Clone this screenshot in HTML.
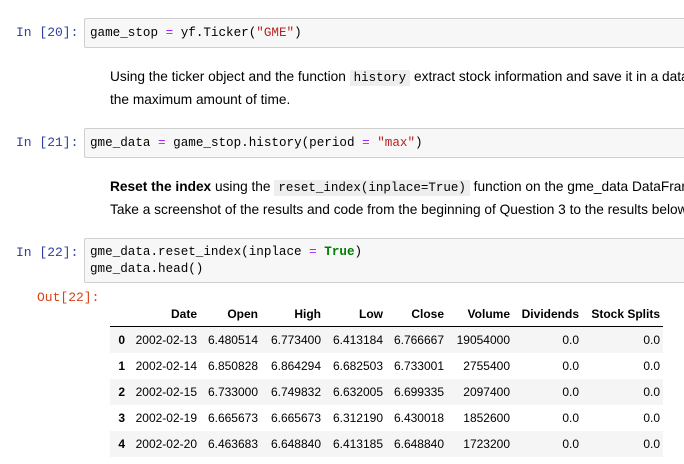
<!DOCTYPE html>
<html><head><style>
body{margin:0;width:684px;height:464px;overflow:hidden;background:#fff;font-family:"Liberation Sans",Arial,sans-serif;position:relative}
.p{position:absolute;font-family:"Liberation Mono",monospace;font-size:13px;color:#303f9f;left:16px}
.box{position:absolute;left:84px;width:600px;background:#f7f7f7;border:1px solid #cfcfcf;border-right:none;border-radius:2px 0 0 2px;font-family:"Liberation Mono",monospace;font-size:12.6px;color:#000;padding:0 5px;box-sizing:border-box;line-height:17px;overflow:hidden;white-space:nowrap}
.md{position:absolute;left:110px;width:574px;overflow:hidden;font-size:13.7px;color:#000;line-height:21px;white-space:nowrap}
code{font-family:"Liberation Mono",monospace;background:#eee;padding:1px 4px;font-size:12.5px}
.o{color:#aa22ff}.s{color:#ba2121}.k{color:#008000;font-weight:bold}
table{position:absolute;left:110px;top:301px;border-collapse:collapse;table-layout:fixed;font-size:12px;width:553px}
th,td{text-align:right;padding:0 3px;height:26px;white-space:nowrap}
thead th{height:25px;border-bottom:1px solid #000}
tbody tr:nth-child(odd){background:#f5f5f5}
</style></head><body>
<div class="p" style="top:25px">In [20]:</div>
<div class="box" style="top:18px;height:30px;padding-top:6px">game_stop <span class="o">=</span> yf.Ticker(<span class="s">"GME"</span>)</div>
<div class="md" style="top:66px">Using the ticker object and the function <code>history</code> extract stock information and save it in a dataframe named gme_data.<br>the maximum amount of time.</div>
<div class="p" style="top:135px">In [21]:</div>
<div class="box" style="top:128px;height:30px;padding-top:6px">gme_data <span class="o">=</span> game_stop.history(period <span class="o">=</span> <span class="s">"max"</span>)</div>
<div class="md" style="top:176px"><b>Reset the index</b> using the <code>reset_index(inplace=True)</code> function on the gme_data DataFrame and display<br>Take a screenshot of the results and code from the beginning of Question 3 to the results below.</div>
<div class="p" style="top:245px">In [22]:</div>
<div class="box" style="top:238px;height:45px;padding-top:5px">gme_data.reset_index(inplace <span class="o">=</span> <span class="k">True</span>)<br>gme_data.head()</div>
<div class="p" style="top:290px;left:37px;color:#d84315">Out[22]:</div>
<table>
<colgroup><col style="width:18px"><col style="width:72px"><col style="width:61px"><col style="width:63px"><col style="width:62px"><col style="width:61px"><col style="width:66px"><col style="width:69px"><col style="width:81px"></colgroup>
<thead><tr><th></th><th>Date</th><th>Open</th><th>High</th><th>Low</th><th>Close</th><th>Volume</th><th>Dividends</th><th>Stock Splits</th></tr></thead>
<tbody>
<tr><th>0</th><td>2002-02-13</td><td>6.480514</td><td>6.773400</td><td>6.413184</td><td>6.766667</td><td>19054000</td><td>0.0</td><td>0.0</td></tr>
<tr><th>1</th><td>2002-02-14</td><td>6.850828</td><td>6.864294</td><td>6.682503</td><td>6.733001</td><td>2755400</td><td>0.0</td><td>0.0</td></tr>
<tr><th>2</th><td>2002-02-15</td><td>6.733000</td><td>6.749832</td><td>6.632005</td><td>6.699335</td><td>2097400</td><td>0.0</td><td>0.0</td></tr>
<tr><th>3</th><td>2002-02-19</td><td>6.665673</td><td>6.665673</td><td>6.312190</td><td>6.430018</td><td>1852600</td><td>0.0</td><td>0.0</td></tr>
<tr><th>4</th><td>2002-02-20</td><td>6.463683</td><td>6.648840</td><td>6.413185</td><td>6.648840</td><td>1723200</td><td>0.0</td><td>0.0</td></tr>
</tbody></table>
</body></html>
